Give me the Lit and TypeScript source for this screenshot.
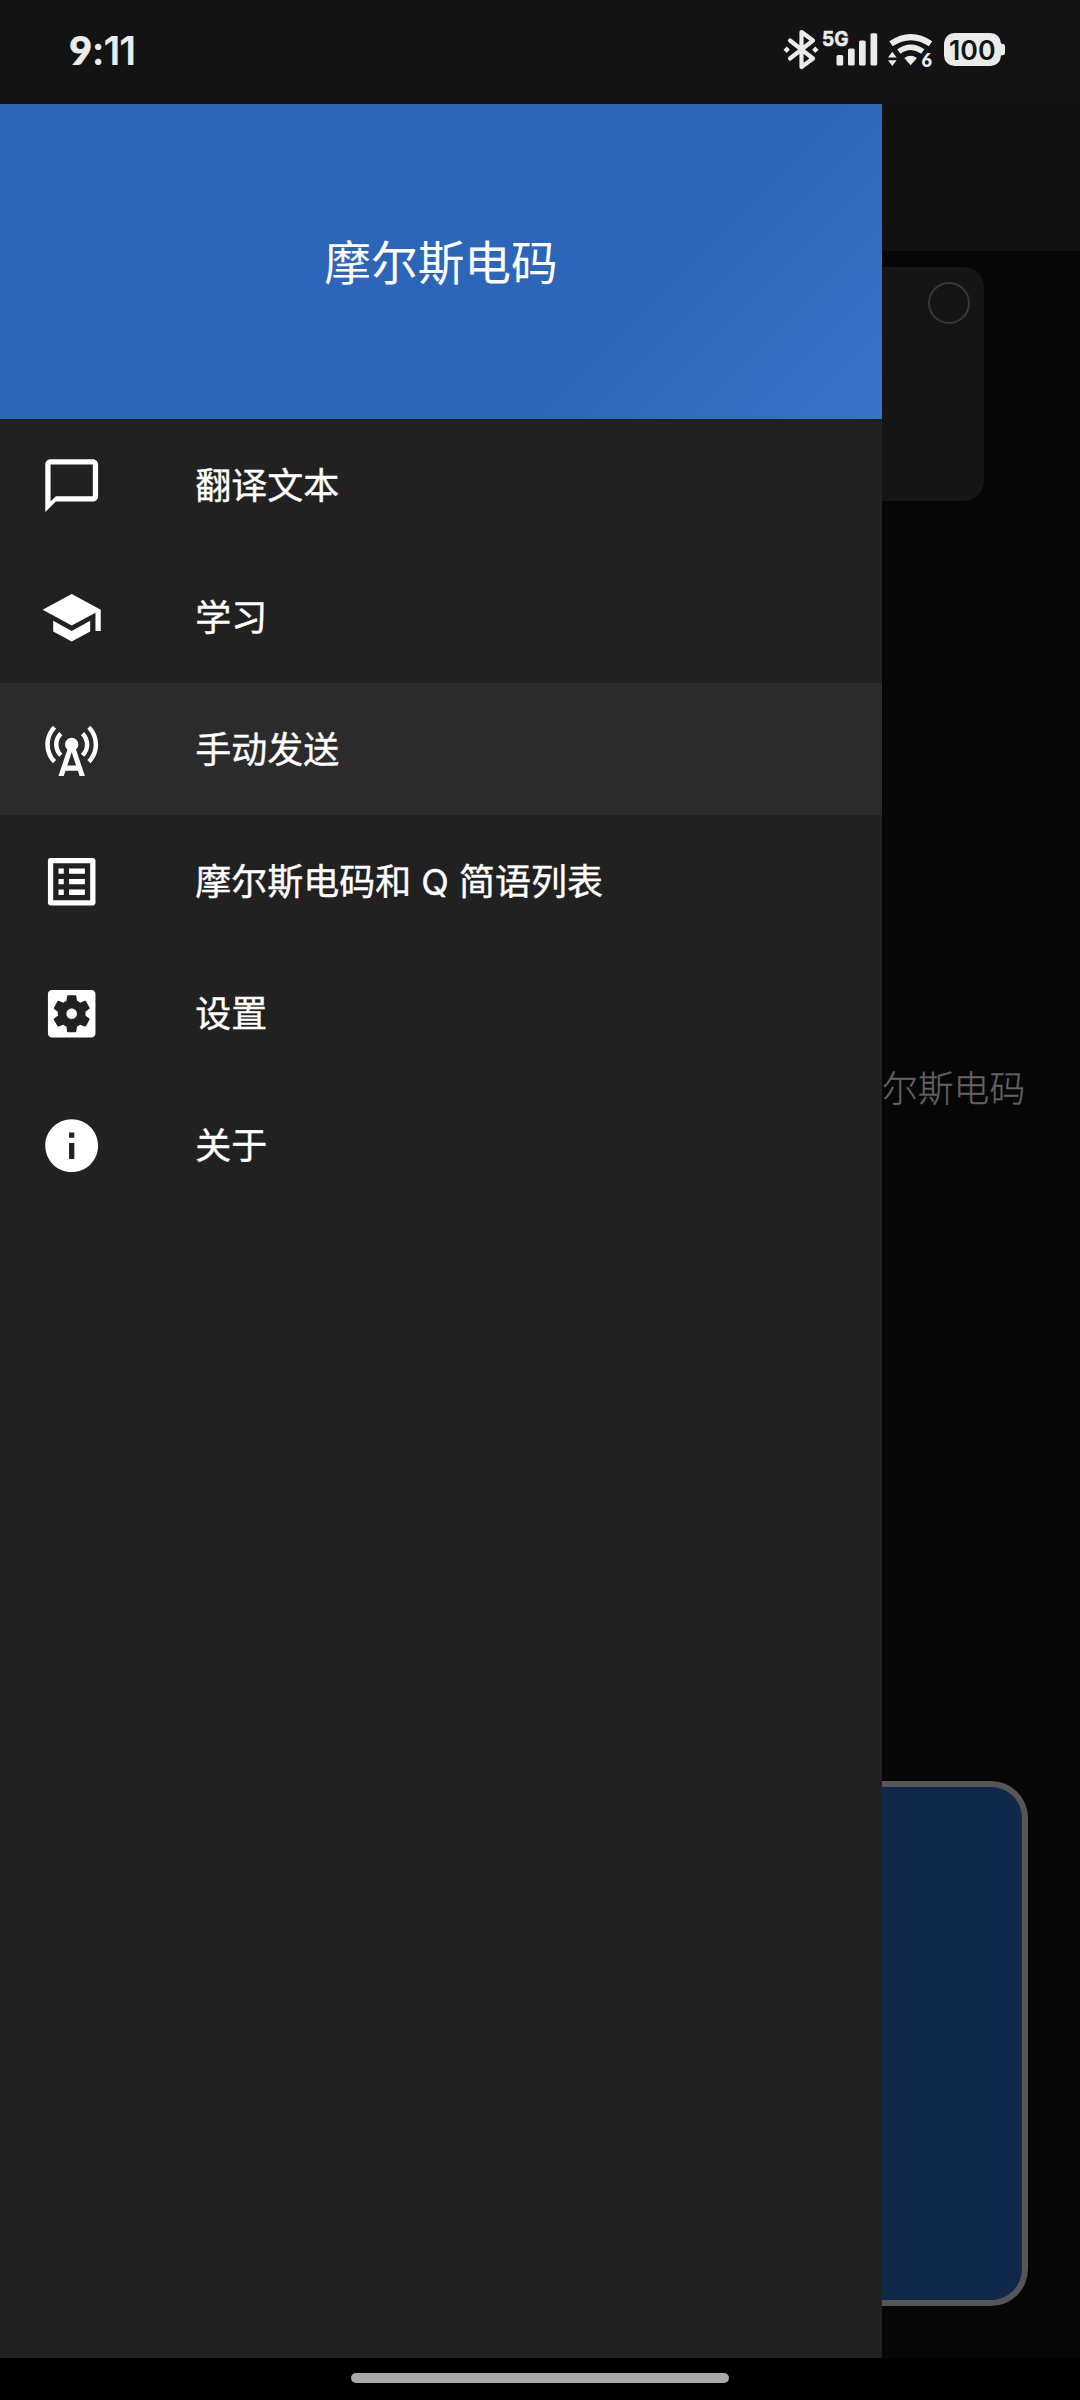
import { LitElement, html, css, svg } from "lit";
import { customElement, property } from "lit/decorators.js";

const ICONS: Record<string, string> = {
  chat: "M20 2H4c-1.1 0-2 .9-2 2v18l4-4h14c1.1 0 2-.9 2-2V4c0-1.1-.9-2-2-2zm0 14H6l-2 2V4h16v12z",
  school:
    "M5 13.180v4L12 21l7-3.820v-4L12 17l-7-3.820zM12 3L1 9l11 6 9-4.910V17h2V9L12 3z",
  tower:
    "M7.3 14.7l1.2-1.2c-1-1-1.5-2.3-1.5-3.5 0-1.3.5-2.6 1.500-3.500L7.300 5.300c-1.300 1.300-2 3-2 4.700s.7 3.400 2 4.700zM19.100 2.900l-1.200 1.200c1.600 1.600 2.400 3.800 2.400 5.900 0 2.100-.8 4.300-2.400 5.900l1.200 1.200c2-2 2.900-4.500 2.900-7.100 0-2.600-1-5.100-2.900-7.100zM6.100 4.100L4.900 2.900C3 4.900 2 7.400 2 10c0 2.600 1 5.100 2.900 7.100l1.200-1.200c-1.600-1.600-2.400-3.800-2.400-5.900 0-2.100.8-4.300 2.400-5.900zM16.700 14.700c1.300-1.300 2-3 2-4.700-.1-1.700-.7-3.400-2-4.700l-1.200 1.200c1 1 1.500 2.300 1.500 3.500 0 1.300-.5 2.600-1.500 3.500l1.200 1.200zM14.500 10c0-1.380-1.120-2.500-2.500-2.500S9.500 8.620 9.500 10c0 .76.34 1.420.87 1.880L7 22h2l.67-2h4.670l.66 2h2l-3.370-10.120c.53-.46.87-1.120.87-1.880zm-4.170 8L12 13l1.670 5h-3.340z",
  list: "M19 5v14H5V5h14m1.100-2H3.900c-.5 0-.9.4-.9.9v16.200c0 .4.4.9.9.9h16.200c.4 0 .9-.5.9-.9V3.900c0-.5-.5-.9-.9-.9zM11 7h6v2h-6V7zm0 4h6v2h-6v-2zm0 4h6v2h-6zM7 7h2v2H7zm0 4h2v2H7zm0 4h2v2H7z",
  settings:
    "M12 10c-1.100 0-2 .9-2 2s.9 2 2 2 2-.9 2-2-.9-2-2-2zM19.500 3H4.500c-.83 0-1.500.67-1.500 1.500v15c0 .83.67 1.500 1.500 1.500h15c.83 0 1.500-.67 1.500-1.500V4.500c0-.83-.67-1.500-1.500-1.500zM17.250 12c0 .23-.02.46-.05.68l1.480 1.160c.13.11.17.3.08.45l-1.400 2.420c-.09.15-.27.21-.43.15l-1.740-.7c-.36.28-.76.51-1.180.69l-.26 1.850c-.03.17-.18.3-.35.3h-2.800c-.17 0-.32-.13-.35-.29l-.26-1.850c-.43-.18-.82-.41-1.180-.69l-1.740.7c-.16.06-.34 0-.43-.15l-1.400-2.420c-.09-.15-.05-.34.08-.45l1.480-1.160c-.03-.23-.05-.46-.05-.69 0-.23.02-.46.05-.68l-1.480-1.160c-.13-.11-.17-.3-.08-.45l1.400-2.420c.09-.15.27-.21.43-.15l1.740.7c.36-.28.76-.51 1.180-.69l.26-1.850c.03-.17.18-.3.35-.3h2.800c.17 0 .32.13.35.29l.26 1.850c.43.18.82.41 1.180.69l1.740-.7c.16-.06.34 0 .43.15l1.400 2.420c.09.15.05.34-.08.45l-1.480 1.160c.03.23.05.46.05.69z",
  info: "M12 2C6.480 2 2 6.480 2 12s4.480 10 10 10 10-4.480 10-10S17.520 2 12 2zm1 15h-2v-6h2v6zm0-8h-2V7h2v2z",
};

const ITEMS = [
  { icon: "chat", label: "翻译文本" },
  { icon: "school", label: "学习" },
  { icon: "tower", label: "手动发送", selected: true },
  { icon: "list", label: "摩尔斯电码和 Q 简语列表" },
  { icon: "settings", label: "设置" },
  { icon: "info", label: "关于" },
];

@customElement("status-bar")
export class StatusBar extends LitElement {
  static styles = css`
    :host {
      display: flex;
      align-items: center;
      justify-content: space-between;
      height: 104px;
      padding: 0 70px 0 69px;
      box-sizing: border-box;
      background: #131313;
      color: #ebebeb;
      font-family: Inter, "Liberation Sans", sans-serif;
    }
    .time {
      font-size: 40px;
      font-weight: 600;
      line-height: 48px;
      letter-spacing: -1px;
      padding-bottom: 3px;
    }
    .hour {
      font-family: Lato, sans-serif;
      font-weight: 800;
      letter-spacing: -0.5px;
    }
    .icons {
      display: block;
      width: 230px;
      height: 104px;
    }
    .small {
      font-size: 20.5px;
      font-weight: 700;
      stroke: #ebebeb;
      stroke-width: 0.5px;
    }
    .gen {
      font-family: Lato, sans-serif;
      font-size: 18px;
      font-weight: 800;
    }
    .level {
      font-size: 27px;
      font-weight: 600;
      fill: #131313;
    }
  `;

  render() {
    return html`
      <span class="time"><span class="hour">9</span>:11</span>
      <svg class="icons" viewBox="780 0 230 104" fill="#ebebeb">
        ${svg`
          <path d="M790 40.500L813 58.500L801.500 67V32L813 40.500L790 58.500" fill="none" stroke="#ebebeb" stroke-width="4.200" stroke-linejoin="round" stroke-linecap="round"/>
          <path d="M786.700 46.500l3.200 3.200-3.200 3.200-3.200-3.200zM815.300 46.500l3.200 3.200-3.200 3.200-3.200-3.200z"/>
          <text class="small" x="822" y="45.500" textLength="26.500" lengthAdjust="spacingAndGlyphs">5G</text>
          <rect x="836.500" y="55" width="6.700" height="10.600" rx="1.500"/>
          <rect x="848" y="48.500" width="6.700" height="17.100" rx="1.500"/>
          <rect x="859" y="40.500" width="6.700" height="25.100" rx="1.500"/>
          <rect x="870.500" y="33.300" width="6.700" height="32.300" rx="1.500"/>
          <path d="M891 43.800Q911 30.500 930.500 43.800" fill="none" stroke="#ebebeb" stroke-width="6"/>
          <path d="M898.800 51.500Q911 43 922.800 51.500" fill="none" stroke="#ebebeb" stroke-width="5.600"/>
          <path d="M904.300 58Q910.600 53.500 917 58L910.600 65.300z"/>
          <path d="M892.300 51.800l4.300 5.800h-8.600zM892.300 66l4.300-5.800h-8.600z"/>
          <text class="gen" x="921.500" y="66.700">6</text>
          <rect x="944" y="33" width="57" height="33" rx="10.500"/>
          <path d="M1000 43.800h2.500q2.500 0 2.500 2.500v6.400q0 2.500-2.500 2.500H1000z"/>
          <text class="level" x="949" y="59.500" textLength="46.500" lengthAdjust="spacingAndGlyphs">100</text>
        `}
      </svg>
    `;
  }
}

@customElement("drawer-item")
export class DrawerItem extends LitElement {
  @property() icon = "";
  @property() label = "";

  static styles = css`
    :host {
      display: flex;
      align-items: center;
      gap: 92px;
      height: 132px;
      padding-left: 39.8px;
      box-sizing: border-box;
      color: #fff;
      font-size: 36px;
    }
    :host([selected]) {
      background: #2b2b2b;
    }
    .icon {
      display: block;
      width: 63.4px;
      height: 63.4px;
      flex: none;
      padding-top: 1px;
    }
    .label {
      white-space: nowrap;
      line-height: 52px;
      padding-top: 2px;
      -webkit-text-stroke: 0.4px #fff;
    }
  `;

  render() {
    return html`
      <svg class="icon" viewBox="0 0 24 24" fill="#fff">
        <path d=${ICONS[this.icon]}></path>
      </svg>
      <span class="label">${this.label}</span>
    `;
  }
}

@customElement("app-root")
export class AppRoot extends LitElement {
  static styles = css`
    :host {
      display: flex;
      flex-direction: column;
      width: 1080px;
      height: 2400px;
      overflow: hidden;
      background: #000;
      font-family: Inter, "Noto Sans CJK SC", sans-serif;
    }
    .body {
      display: flex;
      height: 2254px;
    }
    .drawer {
      width: 882px;
      flex: none;
      background: #212121;
    }
    .header {
      display: flex;
      align-items: center;
      justify-content: center;
      height: 315px;
      padding-top: 3px;
      box-sizing: border-box;
      background: linear-gradient(135deg, #2d65b8 68%, #3973cb 100%);
      color: #fff;
      font-size: 46.7px;
      font-weight: 400;
      line-height: 68px;
    }
    .content {
      flex: 1;
      display: flex;
      flex-direction: column;
      background: #060606;
    }
    .toolbar {
      height: 147px;
      background: #111;
    }
    .card {
      display: flex;
      justify-content: flex-end;
      align-items: flex-start;
      width: 102px;
      height: 234px;
      margin-top: 15.500px;
      padding: 15px 14px 0 0;
      box-sizing: border-box;
      border-radius: 0 20px 20px 0;
      background: #151515;
    }
    .radio {
      width: 42px;
      height: 42px;
      box-sizing: border-box;
      border: 2px solid #38373d;
      border-radius: 50%;
    }
    .hint {
      margin-top: 562.500px;
      line-height: 52px;
      font-size: 35.800px;
      font-weight: 300;
      color: #626262;
      -webkit-text-stroke: 0.3px #626262;
    }
    .key {
      width: 146px;
      height: 525px;
      margin-top: 666px;
      box-sizing: border-box;
      border: 6px solid #565557;
      border-left: 0;
      border-radius: 0 37px 37px 0;
      background: #102849;
    }
    .nav {
      display: flex;
      justify-content: center;
      padding-top: 15px;
    }
    .pill {
      width: 378px;
      height: 10px;
      border-radius: 5px;
      background: #a9a9a9;
    }
  `;

  render() {
    return html`
      <status-bar></status-bar>
      <div class="body">
        <div class="drawer">
          <div class="header">摩尔斯电码</div>
          ${ITEMS.map(
            (item) => html`<drawer-item
              icon=${item.icon}
              label=${item.label}
              ?selected=${item.selected}
            ></drawer-item>`
          )}
        </div>
        <div class="content">
          <div class="toolbar"></div>
          <div class="card"><div class="radio"></div></div>
          <div class="hint">尔斯电码</div>
          <div class="key"></div>
        </div>
      </div>
      <div class="nav"><div class="pill"></div></div>
    `;
  }
}
